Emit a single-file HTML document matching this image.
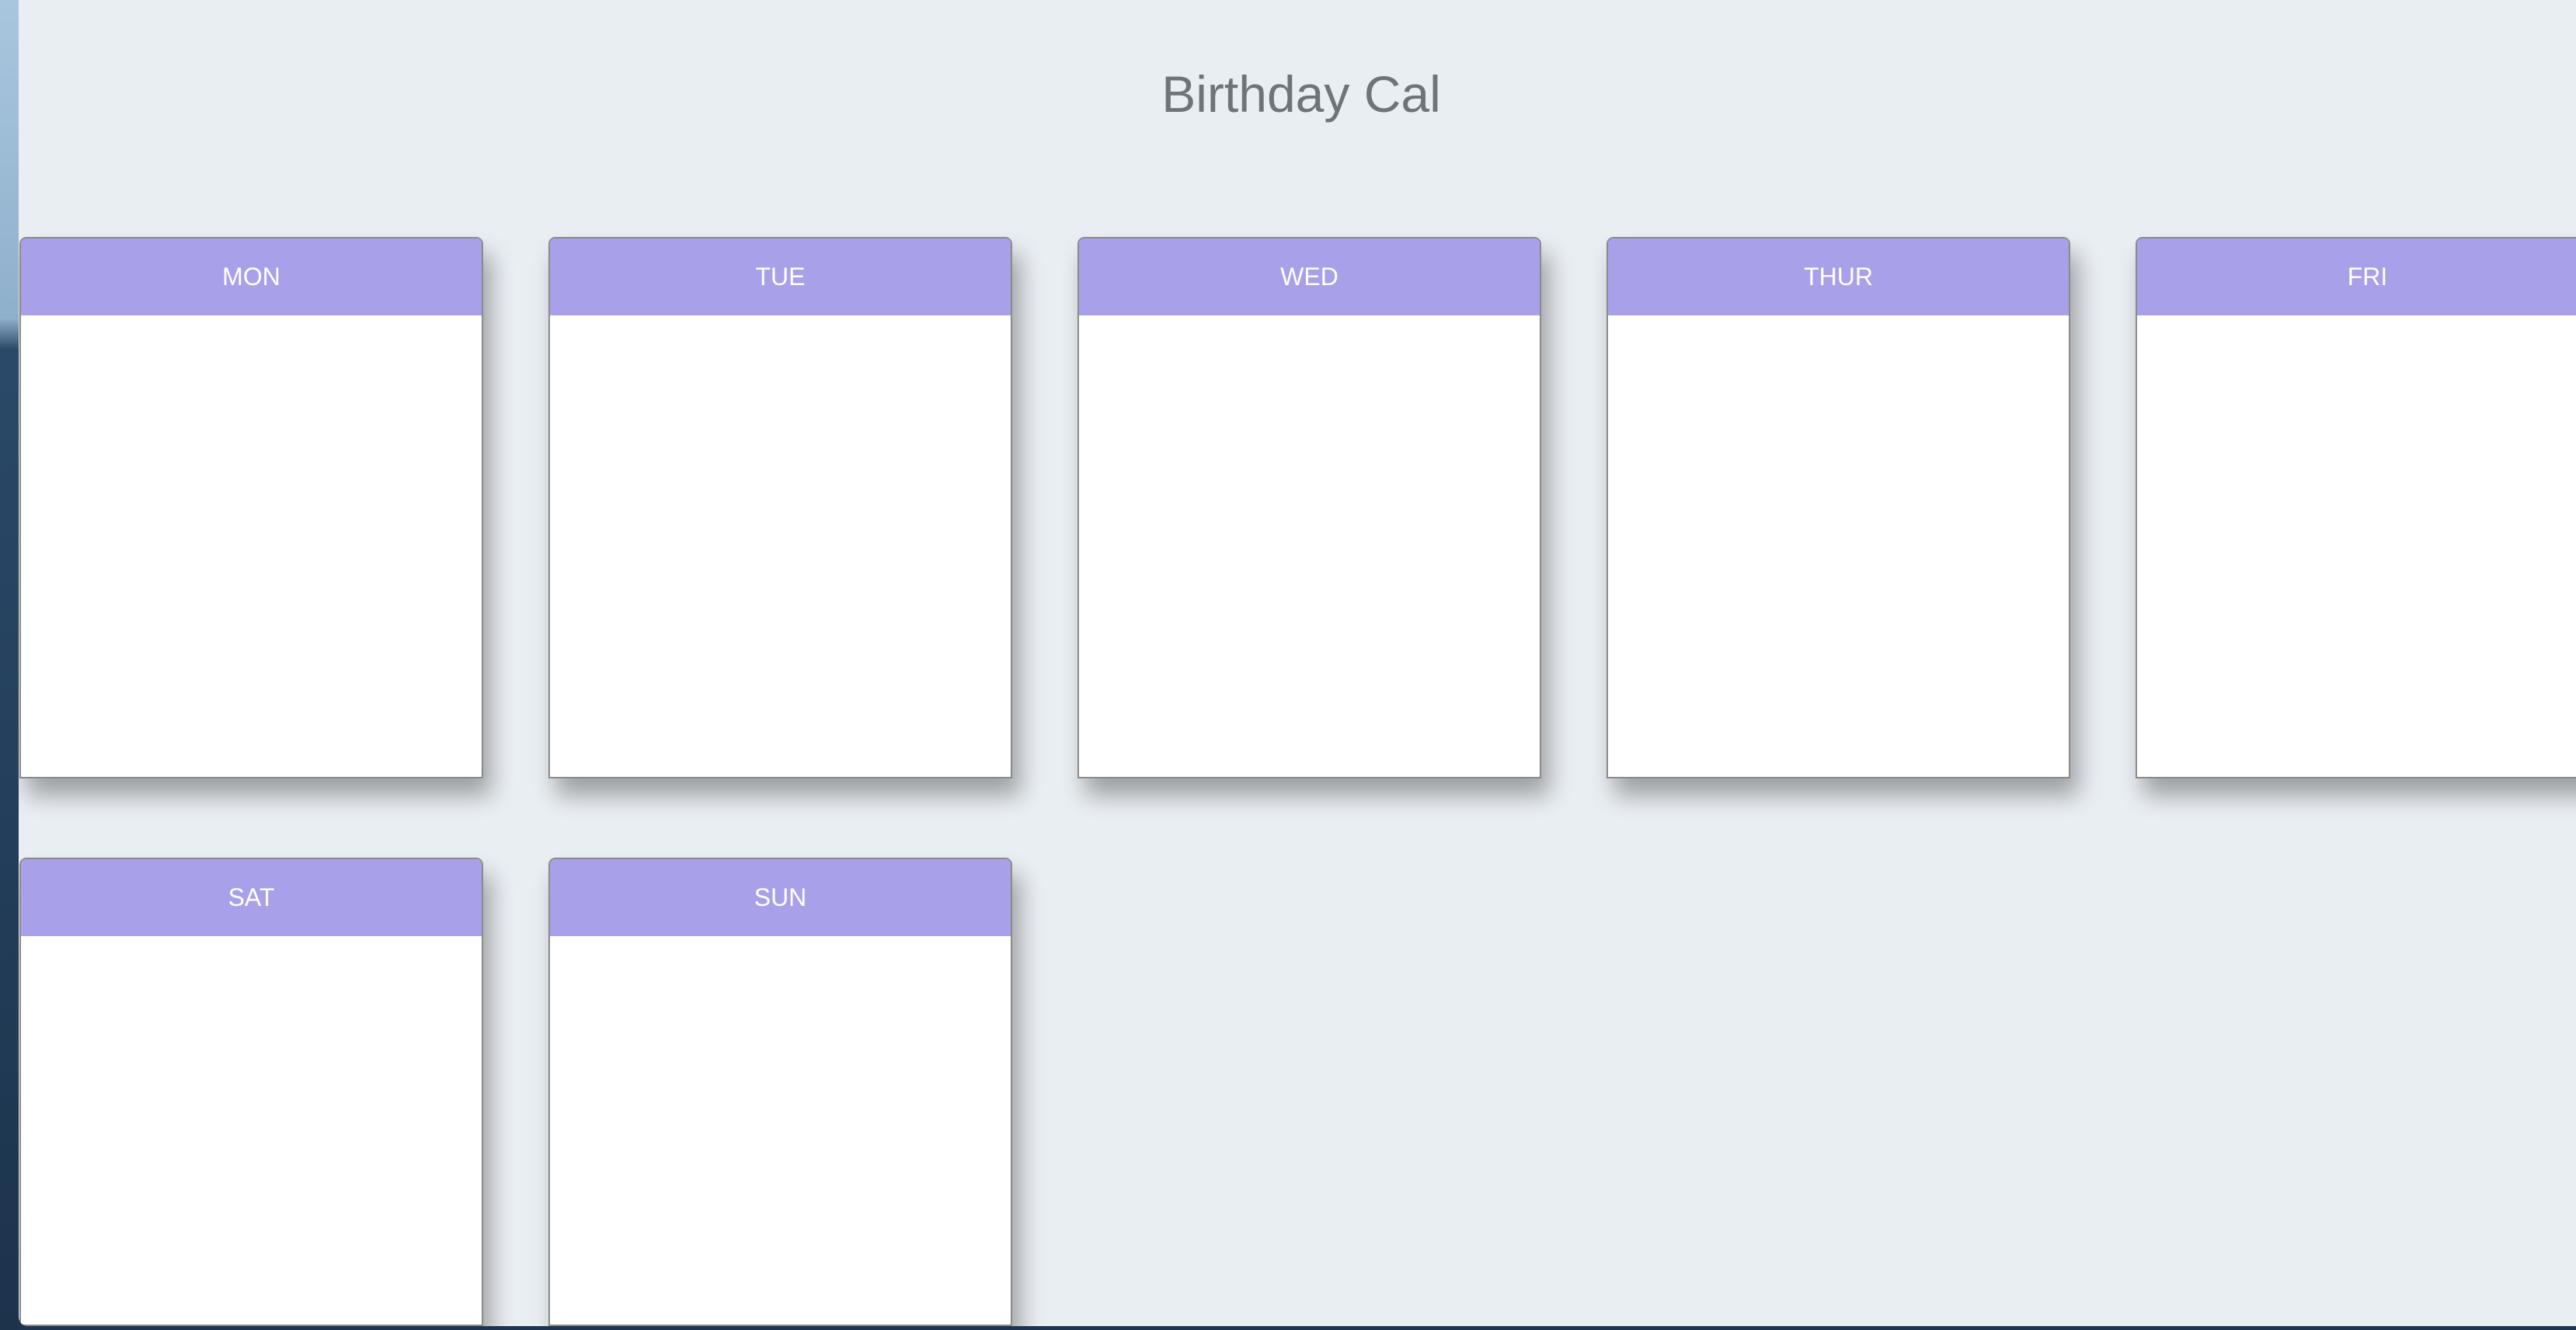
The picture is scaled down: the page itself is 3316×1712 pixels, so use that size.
<!DOCTYPE html>
<html><head><style>
html,body{margin:0;padding:0;width:3316px;height:1712px;overflow:hidden;background:#1d3550;font-family:"Liberation Sans",sans-serif;}
.strip{position:absolute;left:0;top:0;width:24px;height:1712px;background:linear-gradient(#a9c6de 0,#8fb0cc 410px,#2a4968 450px,#1c334c 1712px);}
.win{position:absolute;left:24px;top:0;width:3292px;height:1707px;background:#e9eef2;border-bottom-left-radius:12px;overflow:hidden;}
h1{position:absolute;left:0;width:3302px;top:88px;margin:0;text-align:center;font-weight:normal;font-size:66px;color:#6e7479;line-height:1;}
.card{position:absolute;width:597px;height:697px;background:#fff;border:2px solid #8a8a8a;border-radius:9px 9px 0 0;box-sizing:border-box;box-shadow:10px 22px 30px rgba(0,0,0,.33);overflow:hidden;}
.card .h{height:99px;background:#a8a0e8;color:#fff;font-size:32px;text-align:center;line-height:99px;}
</style></head><body>
<div class="strip"></div>
<div class="win">
<h1>Birthday Cal</h1>
<div class="card" style="left:1px;top:305px"><div class="h">MON</div></div>
<div class="card" style="left:682px;top:305px"><div class="h">TUE</div></div>
<div class="card" style="left:1363px;top:305px"><div class="h">WED</div></div>
<div class="card" style="left:2044px;top:305px"><div class="h">THUR</div></div>
<div class="card" style="left:2725px;top:305px"><div class="h">FRI</div></div>
<div class="card" style="left:1px;top:1104px;height:603px"><div class="h">SAT</div></div>
<div class="card" style="left:682px;top:1104px;height:603px"><div class="h">SUN</div></div>
</div>
</body></html>
